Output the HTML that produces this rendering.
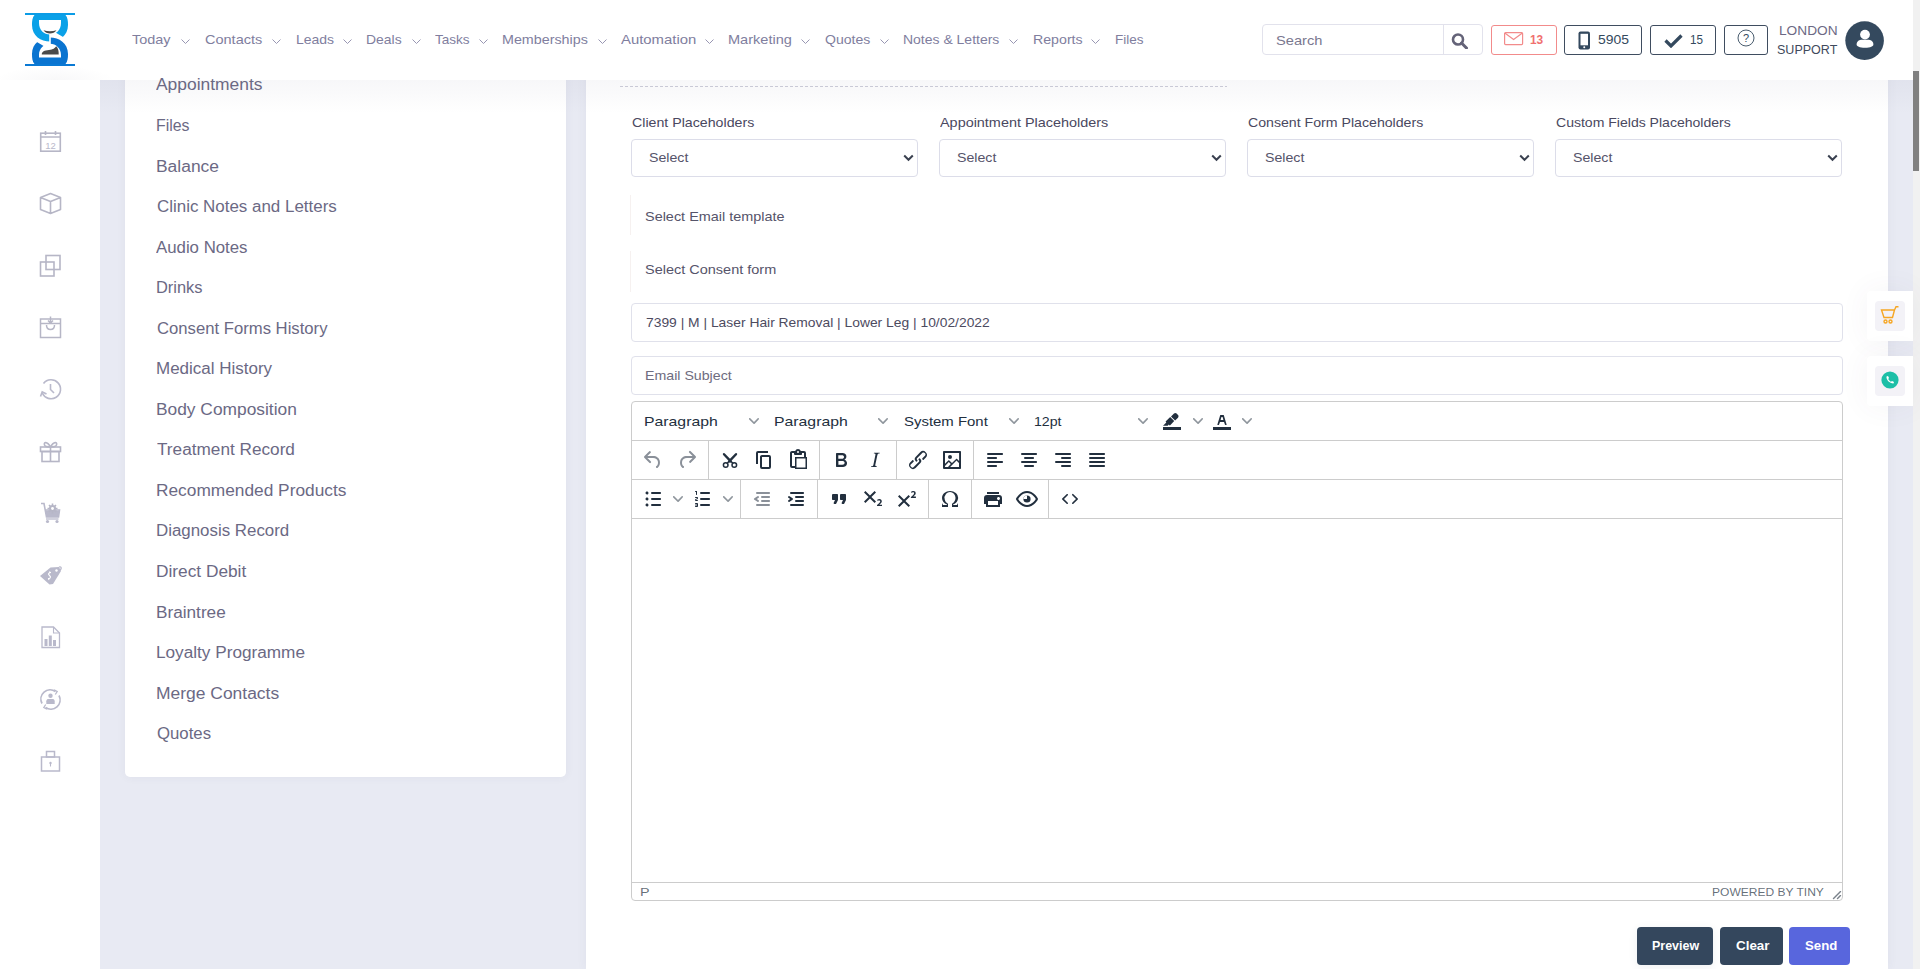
<!DOCTYPE html>
<html><head><meta charset="utf-8"><title>Email</title>
<style>
*{box-sizing:border-box;margin:0;padding:0}
html,body{width:1920px;height:969px;overflow:hidden;background:#fff;font-family:"Liberation Sans",sans-serif}
.a{position:absolute;display:block}
.t{position:absolute;white-space:nowrap;line-height:normal;transform-origin:0 0;font-family:"Liberation Sans",sans-serif}
.box{position:absolute}
</style></head><body>
<!-- grey background -->
<div class="box" style="left:100px;top:80px;width:1813px;height:889px;background:#e8eaf3"></div>
<!-- left card -->
<div class="box" style="left:125px;top:0;width:441px;height:777px;background:#fff;border-radius:0 0 5px 5px;box-shadow:0 0 10px rgba(70,60,110,.06)"></div>
<!-- main panel -->
<div class="box" style="left:586px;top:0;width:1302px;height:969px;background:#fff;box-shadow:0 0 10px rgba(70,60,110,.06)"></div>
<!-- header shadow -->
<div class="box" style="left:100px;top:80px;width:1813px;height:34px;background:linear-gradient(to bottom,rgba(70,70,110,.045),rgba(70,70,110,0))"></div>
<!-- header -->
<div class="box" style="left:0;top:0;width:1913px;height:80px;background:#fff"></div>
<div class="box" style="left:0;top:56px;width:120px;height:24px;background:radial-gradient(ellipse 60px 14px at 55px 24px,rgba(60,60,90,.035),rgba(60,60,90,0))"></div>
<!-- left rail -->
<div class="box" style="left:0;top:80px;width:100px;height:889px;background:#fff"></div>
<!-- scrollbar -->
<div class="box" style="left:1913px;top:0;width:7px;height:969px;background:#f1f1f1"></div>
<div class="box" style="left:1913px;top:71px;width:6px;height:100px;background:#808080"></div>

<!-- logo -->
<svg class="a" style="left:25px;top:13px" width="50" height="53" viewBox="0 0 50 53">
  <defs>
    <clipPath id="cl1"><path d="M0 0 H50 V28 L38.5 24.3 L30.5 19.5 L24.2 19 V31 H0 Z"/></clipPath>
    <clipPath id="cl2"><path d="M50 53 H0 V25 L11.5 28.7 L19.5 33.5 L25.8 34 V22 H50 Z"/></clipPath>
  </defs>
  <rect x="0" y="0" width="50" height="2" fill="#0b9ce6"/>
  <rect x="0" y="51" width="50" height="2" fill="#0a79d4"/>
  <path clip-path="url(#cl1)" fill-rule="evenodd" fill="#0aa1e8" d="M9.5 2 C7.3 4.5 7 8 7 12 C7 23 16 28.5 25 28.5 C34 28.5 43 23 43 12 C43 8 42.7 4.5 40.5 2 Z M14 7 H36 V10 C36 17 31 21.5 25 21.5 C19 21.5 14 17 14 10 Z"/>
  <path clip-path="url(#cl2)" fill-rule="evenodd" fill="#0a74d0" d="M40.5 51 C42.7 48.5 43 45 43 41 C43 30 34 24.5 25 24.5 C16 24.5 7 30 7 41 C7 45 7.3 48.5 9.5 51 Z M36 44.6 H14 V42 C14 35.5 19 30.8 25 30.8 C31 30.8 36 35.5 36 42 Z"/>
  <path d="M18.5 17.3 Q25 19 31.5 17.3 Q29 20.6 25 20.6 Q21 20.6 18.5 17.3 Z" fill="#4a4a4a"/>
  <path d="M16.8 41.6 C16.6 38.6 19.5 37.4 24 37 C28 36.6 30 35.2 31.2 33.3 C33.2 35 33.8 38 33.7 41.6 Z" fill="#4a4a4a"/>
</svg>

<!-- search box -->
<div class="box" style="left:1262px;top:24px;width:221px;height:31px;border:1px solid #e2e2ec;border-radius:4px"></div>
<div class="box" style="left:1443px;top:25px;width:1px;height:29px;background:#e2e2ec"></div>
<svg class="a" style="left:1451px;top:33px" width="18" height="16" viewBox="0 0 18 16"><circle cx="7" cy="6.5" r="5" fill="none" stroke="#646378" stroke-width="2.6"/><path d="M10.5 10 L15.5 15" stroke="#646378" stroke-width="3" stroke-linecap="round"/></svg>
<!-- mail btn -->
<div class="box" style="left:1491px;top:25px;width:66px;height:30px;border:1px solid #f28b8b;border-radius:3px"></div>
<svg class="a" style="left:1504px;top:32px" width="20" height="14" viewBox="0 0 20 14"><rect x="0.6" y="0.6" width="18" height="12" rx="1" fill="none" stroke="#f28b8b" stroke-width="1.2"/><path d="M0.8 1 L9.6 7.5 L18.4 1" fill="none" stroke="#f28b8b" stroke-width="1.2"/></svg>
<!-- phone btn -->
<div class="box" style="left:1564px;top:25px;width:78px;height:30px;border:1px solid #3f4d60;border-radius:3px"></div>
<svg class="a" style="left:1578px;top:31px" width="13" height="19" viewBox="0 0 13 19"><rect x="0.5" y="0.5" width="11.5" height="18" rx="2" fill="#34495e"/><rect x="2.5" y="2.8" width="7.5" height="11.5" fill="#fff"/><circle cx="6.25" cy="16.3" r="1" fill="#fff"/></svg>
<!-- check btn -->
<div class="box" style="left:1650px;top:25px;width:66px;height:30px;border:1px solid #3f4d60;border-radius:3px"></div>
<svg class="a" style="left:1664px;top:33px" width="19" height="15" viewBox="0 0 19 15"><path d="M1.5 7.5 L7 13 L17.5 2.5" fill="none" stroke="#34495e" stroke-width="3.2"/></svg>
<!-- help btn -->
<div class="box" style="left:1724px;top:25px;width:44px;height:30px;border:1px solid #3f4d60;border-radius:3px"></div>
<svg class="a" style="left:1737px;top:29px" width="18" height="18" viewBox="0 0 18 18"><circle cx="9" cy="9" r="8" fill="none" stroke="#34495e" stroke-width="0.9"/><text x="9" y="13" font-family="Liberation Sans" font-size="11" text-anchor="middle" fill="#34495e">?</text></svg>
<!-- avatar -->
<svg class="a" style="left:1845px;top:21px" width="40" height="40" viewBox="0 0 40 40"><circle cx="19.6" cy="19.6" r="19.3" fill="#34495e"/><circle cx="20" cy="13.6" r="4.9" fill="#fff"/><path d="M11.6 23.5 C11.6 20.2 14.6 18.8 17 18.8 L23 18.8 C25.4 18.8 28.4 20.2 28.4 23.5 C28.4 25.3 25.5 26.8 20 26.8 C14.5 26.8 11.6 25.3 11.6 23.5 Z" fill="#fff"/></svg>

<!-- sidebar icons -->
<g></g>
<svg class="a" style="left:38px;top:129px" width="25" height="25" viewBox="0 0 25 25" fill="none" stroke="#b6b6c6" stroke-width="1.6">
  <rect x="2.7" y="4.2" width="19.6" height="18" />
  <path d="M2.7 8 H22.3 M7.5 2 V6 M17.5 2 V6"/>
  <text x="12.5" y="19.6" font-family="Liberation Sans" font-size="9.5" text-anchor="middle" fill="#b9b9cb" stroke="none">12</text>
</svg>
<svg class="a" style="left:38px;top:191px" width="25" height="25" viewBox="0 0 25 25" fill="none" stroke="#b6b6c6" stroke-width="1.6" stroke-linejoin="round">
  <path d="M12.5 2.5 L22.5 6.5 V18.5 L12.5 22.5 L2.5 18.5 V6.5 Z M2.5 6.5 L12.5 10.5 L22.5 6.5 M12.5 10.5 V22.5"/>
</svg>
<svg class="a" style="left:38px;top:253px" width="25" height="25" viewBox="0 0 25 25" fill="none" stroke="#b6b6c6" stroke-width="1.6">
  <rect x="8" y="2.5" width="14" height="14"/><rect x="2.5" y="9" width="13.5" height="14"/>
</svg>
<svg class="a" style="left:38px;top:315px" width="25" height="25" viewBox="0 0 25 25" fill="none" stroke="#b6b6c6" stroke-width="1.5">
  <rect x="2.5" y="4" width="20" height="18.5"/><path d="M2.5 8.5 H22.5 M12.5 1.5 V8 M10 5.5 L12.5 8 L15 5.5 M8.5 10 C8.5 16 16.5 16 16.5 10"/>
</svg>
<svg class="a" style="left:38px;top:377px" width="25" height="25" viewBox="0 0 25 25" fill="none" stroke="#b9b9cb" stroke-width="1.6">
  <path d="M4.3 16 A9.5 9.5 0 1 0 5.5 6.5"/><path d="M12.5 7 V12.5 L16 16"/><path d="M2.5 19.5 L4.2 14.8 L8.5 17" />
</svg>
<svg class="a" style="left:38px;top:439px" width="25" height="25" viewBox="0 0 25 25" fill="none" stroke="#b6b6c6" stroke-width="1.6">
  <rect x="2.5" y="8" width="20" height="4.5"/><rect x="4" y="12.5" width="17" height="10"/><path d="M12.5 8 V22.5 M12.5 8 C9 2 5.5 3 6.5 6 C7 7.5 9 8 12.5 8 C16 8 18 7.5 18.5 6 C19.5 3 16 2 12.5 8"/>
</svg>
<svg class="a" style="left:38px;top:501px" width="25" height="25" viewBox="0 0 25 25" fill="#b9b9cb">
  <path d="M3 2.5 L6 2.5 L8.5 16 L20.5 16 L21.5 9 L18 9 A3.5 3.5 0 0 1 11 9 L7 9" fill="none" stroke="#b9b9cb" stroke-width="1.6"/>
  <path d="M7.3 9.5 L21.5 9.5 L20.5 16 L8.5 16 Z"/>
  <circle cx="14.5" cy="7.5" r="3.6"/><path d="M14.5 2.5 V12.5 M9.5 7.5 H19.5 M11 4 L18 11 M18 4 L11 11" stroke="#b6b6c6" stroke-width="1.6"/>
  <circle cx="14.5" cy="7.5" r="1.4" fill="#fff"/>
  <circle cx="9.5" cy="20.5" r="1.6"/><circle cx="19" cy="20.5" r="1.6"/><path d="M8 18 H20.5" stroke="#b9b9cb" stroke-width="1.3"/>
</svg>
<svg class="a" style="left:38px;top:563px" width="25" height="25" viewBox="0 0 25 25">
  <path d="M2 13 L12.5 4.5 L21 4 L23 8 L15 21 L11.5 21.5 Z" fill="#b9b9cb"/>
  <path d="M21 4 C24 3 24 7 20.5 7.5" fill="none" stroke="#b9b9cb" stroke-width="1.3"/>
  <circle cx="18.5" cy="7.5" r="1.2" fill="#fff"/>
  <path d="M13 9.5 C11 9.5 9.5 11 11.5 12.5 C13.5 14 12 16 10 15.5 M11.5 8.5 L11.8 9.5 M11 16 L10.6 17" fill="none" stroke="#fff" stroke-width="1.2"/>
</svg>
<svg class="a" style="left:38px;top:625px" width="25" height="25" viewBox="0 0 25 25">
  <path d="M4 2 H15.5 L21.5 8 V22.5 H4 Z" fill="none" stroke="#b9b9cb" stroke-width="1.3"/>
  <path d="M15.5 2 V8 H21.5" fill="none" stroke="#b9b9cb" stroke-width="1.1"/>
  <rect x="6.5" y="14" width="3" height="7" fill="#b9b9cb"/><rect x="10.8" y="10.5" width="3" height="10.5" fill="#b9b9cb"/><rect x="15" y="15" width="3" height="6" fill="#b9b9cb"/>
</svg>
<svg class="a" style="left:38px;top:687px" width="25" height="25" viewBox="0 0 25 25" fill="none" stroke="#b9b9cb" stroke-width="1.7">
  <path d="M4 16.5 A9.3 9.3 0 0 1 17.5 4.5"/><path d="M21 8.5 A9.3 9.3 0 0 1 7.5 20.5"/>
  <path d="M16 2.8 L19.2 4.5 L17.3 7.5 M9 22.2 L5.8 20.5 L7.7 17.5" stroke-width="1.3"/>
  <circle cx="12.5" cy="8.8" r="2.2" fill="#b9b9cb" stroke="none"/><path d="M8.3 17 V14.2 C8.3 12.6 9.5 12 10.5 12 H14.5 C15.5 12 16.7 12.6 16.7 14.2 V17 Z" fill="#b9b9cb" stroke="none"/>
</svg>
<svg class="a" style="left:38px;top:749px" width="25" height="25" viewBox="0 0 25 25" fill="none" stroke="#b9b9cb" stroke-width="1.5">
  <rect x="3.5" y="8" width="18" height="14"/><rect x="8.5" y="2.5" width="8" height="5.5"/>
  <circle cx="12.5" cy="14" r="1.2" fill="#b9b9cb" stroke="none"/><path d="M12.5 14 V17.5" stroke-width="1.1"/>
</svg>

<!-- dashed line -->
<div class="box" style="left:620px;top:86px;width:607px;height:1px;background:repeating-linear-gradient(to right,#c9c9d6 0 3px,transparent 3px 5px)"></div>

<!-- selects -->
<div class="box" style="left:631px;top:139px;width:287px;height:38px;border:1px solid #dcdde9;border-radius:4px"></div>
<div class="box" style="left:939px;top:139px;width:287px;height:38px;border:1px solid #dcdde9;border-radius:4px"></div>
<div class="box" style="left:1247px;top:139px;width:287px;height:38px;border:1px solid #dcdde9;border-radius:4px"></div>
<div class="box" style="left:1555px;top:139px;width:287px;height:38px;border:1px solid #dcdde9;border-radius:4px"></div>
<svg class="a" style="left:903px;top:154px" width="11" height="8" viewBox="0 0 11 8"><path d="M1.2 1.5 L5.5 5.8 L9.8 1.5" fill="none" stroke="#3a4150" stroke-width="2"/></svg>
<svg class="a" style="left:1211px;top:154px" width="11" height="8" viewBox="0 0 11 8"><path d="M1.2 1.5 L5.5 5.8 L9.8 1.5" fill="none" stroke="#3a4150" stroke-width="2"/></svg>
<svg class="a" style="left:1519px;top:154px" width="11" height="8" viewBox="0 0 11 8"><path d="M1.2 1.5 L5.5 5.8 L9.8 1.5" fill="none" stroke="#3a4150" stroke-width="2"/></svg>
<svg class="a" style="left:1827px;top:154px" width="11" height="8" viewBox="0 0 11 8"><path d="M1.2 1.5 L5.5 5.8 L9.8 1.5" fill="none" stroke="#3a4150" stroke-width="2"/></svg>

<!-- faint select2 borders -->
<div class="box" style="left:630px;top:195px;width:1px;height:40px;background:#f6f1f0"></div>
<div class="box" style="left:630px;top:251px;width:1px;height:41px;background:#f6f1f0"></div>

<!-- inputs -->
<div class="box" style="left:631px;top:303px;width:1212px;height:39px;border:1px solid #e0e1eb;border-radius:4px"></div>
<div class="box" style="left:631px;top:356px;width:1212px;height:39px;border:1px solid #e0e1eb;border-radius:4px"></div>

<!-- editor -->
<div class="box" style="left:631px;top:401px;width:1212px;height:500px;border:1px solid #cccccc;border-radius:4px"></div>
<div class="box" style="left:632px;top:440px;width:1210px;height:1px;background:#cccccc"></div>
<div class="box" style="left:632px;top:479px;width:1210px;height:1px;background:#cccccc"></div>
<div class="box" style="left:632px;top:518px;width:1210px;height:1px;background:#cccccc"></div>
<div class="box" style="left:632px;top:882px;width:1210px;height:1px;background:#cccccc"></div>
<!-- separators row1 -->
<div class="box" style="left:708px;top:441px;width:1px;height:38px;background:#cccccc"></div>
<div class="box" style="left:819px;top:441px;width:1px;height:38px;background:#cccccc"></div>
<div class="box" style="left:896px;top:441px;width:1px;height:38px;background:#cccccc"></div>
<div class="box" style="left:973px;top:441px;width:1px;height:38px;background:#cccccc"></div>
<!-- separators row2 -->
<div class="box" style="left:740px;top:480px;width:1px;height:38px;background:#cccccc"></div>
<div class="box" style="left:817px;top:480px;width:1px;height:38px;background:#cccccc"></div>
<div class="box" style="left:928px;top:480px;width:1px;height:38px;background:#cccccc"></div>
<div class="box" style="left:971px;top:480px;width:1px;height:38px;background:#cccccc"></div>
<div class="box" style="left:1048px;top:480px;width:1px;height:38px;background:#cccccc"></div>
<!-- resize handle -->
<svg class="a" style="left:1832px;top:890px" width="10" height="10" viewBox="0 0 10 10" fill="rgba(34,47,62,.6)"><path d="M8.1 1.1A.5.5 0 119 2l-7 7A.5.5 0 111 8l7-7zM8.1 5.1A.5.5 0 119 6l-3 3A.5.5 0 115 8l3-3z"/></svg>

<!-- buttons -->
<div class="box" style="left:1637px;top:927px;width:76px;height:38px;background:#34475d;border-radius:4px;box-shadow:0 2px 10px rgba(52,71,93,.08)"></div>
<div class="box" style="left:1720px;top:927px;width:63px;height:38px;background:#34475d;border-radius:4px"></div>
<div class="box" style="left:1789px;top:927px;width:61px;height:38px;background:#5866dd;border-radius:4px"></div>

<!-- floating widgets -->
<div class="box" style="left:1867px;top:291px;width:46px;height:50px;background:#fff;border-radius:4px 0 0 4px;box-shadow:0 0 30px rgba(82,63,105,.06)"></div>
<div class="box" style="left:1875px;top:301px;width:30px;height:30px;background:#f3f2f7;border-radius:4px"></div>
<svg class="a" style="left:1880px;top:305px" width="20" height="20" viewBox="0 0 20 20" fill="none" stroke="#f6a623" stroke-width="1.4"><path d="M1.5 5 H14.5 L12.5 12.5 H4 Z M14.5 5 L16 1.8 H18.5"/><circle cx="5.5" cy="16.5" r="1.5"/><circle cx="10.5" cy="16.5" r="1.5"/></svg>
<div class="box" style="left:1867px;top:356px;width:46px;height:50px;background:#fff;border-radius:4px 0 0 4px;box-shadow:0 0 30px rgba(82,63,105,.06)"></div>
<div class="box" style="left:1875px;top:366px;width:30px;height:30px;background:#f3f2f7;border-radius:4px"></div>
<svg class="a" style="left:1881px;top:371px" width="18" height="18" viewBox="0 0 18 18"><circle cx="9" cy="9" r="8.6" fill="#1cbfa7"/><path d="M5.5 5.5 C5 8.5 8.5 12.5 12.5 12.5 L13 11 L11 10 L10 10.8 C8.8 10.2 7.8 9.2 7.2 8 L8 7 L7 5 Z" fill="#fff"/></svg>

<svg class="a" style="left:181px;top:38.5px;" width="9" height="5" viewBox="0 0 9 5"><path d="M0.5 0.5L4.5 4.5L8.5 0.5" fill="none" stroke="#9896b2" stroke-width="1"/></svg>
<svg class="a" style="left:272px;top:38.5px;" width="9" height="5" viewBox="0 0 9 5"><path d="M0.5 0.5L4.5 4.5L8.5 0.5" fill="none" stroke="#9896b2" stroke-width="1"/></svg>
<svg class="a" style="left:342.75px;top:38.5px;" width="9" height="5" viewBox="0 0 9 5"><path d="M0.5 0.5L4.5 4.5L8.5 0.5" fill="none" stroke="#9896b2" stroke-width="1"/></svg>
<svg class="a" style="left:411.9px;top:38.5px;" width="9" height="5" viewBox="0 0 9 5"><path d="M0.5 0.5L4.5 4.5L8.5 0.5" fill="none" stroke="#9896b2" stroke-width="1"/></svg>
<svg class="a" style="left:479px;top:38.5px;" width="9" height="5" viewBox="0 0 9 5"><path d="M0.5 0.5L4.5 4.5L8.5 0.5" fill="none" stroke="#9896b2" stroke-width="1"/></svg>
<svg class="a" style="left:597.5px;top:38.5px;" width="9" height="5" viewBox="0 0 9 5"><path d="M0.5 0.5L4.5 4.5L8.5 0.5" fill="none" stroke="#9896b2" stroke-width="1"/></svg>
<svg class="a" style="left:705px;top:38.5px;" width="9" height="5" viewBox="0 0 9 5"><path d="M0.5 0.5L4.5 4.5L8.5 0.5" fill="none" stroke="#9896b2" stroke-width="1"/></svg>
<svg class="a" style="left:801px;top:38.5px;" width="9" height="5" viewBox="0 0 9 5"><path d="M0.5 0.5L4.5 4.5L8.5 0.5" fill="none" stroke="#9896b2" stroke-width="1"/></svg>
<svg class="a" style="left:880px;top:38.5px;" width="9" height="5" viewBox="0 0 9 5"><path d="M0.5 0.5L4.5 4.5L8.5 0.5" fill="none" stroke="#9896b2" stroke-width="1"/></svg>
<svg class="a" style="left:1009px;top:38.5px;" width="9" height="5" viewBox="0 0 9 5"><path d="M0.5 0.5L4.5 4.5L8.5 0.5" fill="none" stroke="#9896b2" stroke-width="1"/></svg>
<svg class="a" style="left:1091px;top:38.5px;" width="9" height="5" viewBox="0 0 9 5"><path d="M0.5 0.5L4.5 4.5L8.5 0.5" fill="none" stroke="#9896b2" stroke-width="1"/></svg>
<svg class="a" style="left:641px;top:448px" width="24" height="24" viewBox="0 0 24 24" fill="#8a9099"><path d="M6.4 8H12c3.7 0 6.2 2 6.8 5.1.6 2.7-.4 5.6-2.3 6.8a1 1 0 01-1-1.8c1.1-.6 1.8-2.7 1.4-4.6-.5-2.1-2.1-3.5-4.9-3.5H6.4l3.3 3.3a1 1 0 11-1.4 1.4l-5-5a1 1 0 010-1.4l5-5a1 1 0 011.4 1.4L6.4 8z"/></svg>
<svg class="a" style="left:675px;top:448px" width="24" height="24" viewBox="0 0 24 24" fill="#8a9099"><path d="M17.6 10H12c-2.8 0-4.4 1.4-4.9 3.5-.4 2 .3 4 1.4 4.6a1 1 0 11-1 1.8c-2-1.2-2.9-4.1-2.3-6.8.6-3 3-5.1 6.8-5.1h5.6l-3.3-3.3a1 1 0 111.4-1.4l5 5a1 1 0 010 1.4l-5 5a1 1 0 01-1.4-1.4l3.3-3.3z"/></svg>
<svg class="a" style="left:718px;top:448px" width="24" height="24" viewBox="0 0 24 24" fill="#222f3e"><path d="M6 6.2 L12.8 13.4 M18 6.2 L11.2 13.4" stroke="#222f3e" stroke-width="2.4" stroke-linecap="round" fill="none"/><path d="M12 12.6 L9 15.2 M12 12.6 L15 15.2" stroke="#222f3e" stroke-width="1.5" fill="none"/><circle cx="7.7" cy="17" r="2.3" fill="none" stroke="#222f3e" stroke-width="1.5"/><circle cx="16.3" cy="17" r="2.3" fill="none" stroke="#222f3e" stroke-width="1.5"/></svg>
<svg class="a" style="left:752px;top:448px" width="24" height="24" viewBox="0 0 24 24" fill="#222f3e"><path d="M16 3H6a2 2 0 00-2 2v11h2V5h10V3zm1 4a2 2 0 012 2v10a2 2 0 01-2 2h-7a2 2 0 01-2-2V9c0-1.2.9-2 2-2h7zm0 12V9h-7v10h7z"/></svg>
<svg class="a" style="left:786px;top:448px" width="24" height="24" viewBox="0 0 24 24" fill="#222f3e"><path d="M18 9V5h-2v1c0 .6-.4 1-1 1H9a1 1 0 01-1-1V5H6v13h3V9h9zM9 20H6a2 2 0 01-2-2V5c0-1.1.9-2 2-2h3.2A3 3 0 0112 1a3 3 0 012.8 2H18a2 2 0 012 2v4h1v12H9v-1zm1.5-9.5v9h9v-9h-9zM12 3a1 1 0 100 2 1 1 0 000-2z"/></svg>
<svg class="a" style="left:829px;top:448px" width="24" height="24" viewBox="0 0 24 24" fill="#222f3e"><path d="M7.8 19c-.3 0-.5 0-.6-.2l-.2-.5V5.7c0-.2 0-.4.2-.5l.6-.2h5c1.5 0 2.7.3 3.5 1 .7.6 1.1 1.4 1.1 2.5a3 3 0 01-.6 1.9c-.4.6-1 1-1.6 1.2.4.1.9.3 1.3.6s.8.7 1 1.2c.4.4.5 1 .5 1.6 0 1.3-.4 2.3-1.3 3-.8.7-2.1 1-3.8 1H7.8zm5-8.3c.6 0 1.2-.1 1.600-.5.4-.3.6-.7.6-1.3 0-1.1-.8-1.7-2.3-1.7H9.3v3.5h3.4zm.5 6c.7 0 1.3-.1 1.7-.4.4-.4.6-.9.6-1.5s-.2-1-.7-1.4c-.4-.3-1-.4-2-.4H9.4v3.8h4z"/></svg>
<svg class="a" style="left:863px;top:448px" width="24" height="24" viewBox="0 0 24 24" fill="#222f3e"><path d="M16.7 4.7l-.1.9h-.3c-.6 0-1 0-1.4.3-.3.3-.4.6-.5 1.1l-2.1 9.8v.6c0 .5.4.8 1.4.8h.2l-.2.8H8l.2-.8h.2c1.1 0 1.8-.5 2-1.5l2-9.8.1-.5c0-.6-.4-.8-1.4-.8h-.3l.2-.9h5.8z"/></svg>
<svg class="a" style="left:906px;top:448px" width="24" height="24" viewBox="0 0 24 24" fill="#222f3e"><path d="M6.2 12.3a1 1 0 011.4 1.4l-2.1 2a2 2 0 102.7 2.8l4.8-4.8a1 1 0 000-1.4 1 1 0 111.4-1.3 2.9 2.9 0 010 4L9.600 20a3.9 3.9 0 01-5.5-5.5l2-2zm11.6-.6a1 1 0 01-1.4-1.4l2-2a2 2 0 10-2.600-2.8L11 10.3a1 1 0 000 1.4A1 1 0 119.6 13a2.9 2.9 0 010-4L14.4 4a3.9 3.9 0 015.5 5.5l-2 2z"/></svg>
<svg class="a" style="left:940px;top:448px" width="24" height="24" viewBox="0 0 24 24" fill="#222f3e"><path d="M5 15.7l3.3-3.2c.3-.3.7-.3 1 0L12 15l4.1-4c.3-.4.8-.4 1 0l2 1.9V5H5v10.7zM5 18V19h3l2.8-2.9-2-2L5 17.9zm14-3l-2.5-2.4-6.4 6.5H19v-4zM4 3h16c.6 0 1 .4 1 1v16c0 .6-.4 1-1 1H4a1 1 0 01-1-1V4c0-.6.4-1 1-1zm6 8a2 2 0 100-4 2 2 0 000 4z"/></svg>
<svg class="a" style="left:983px;top:448px" width="24" height="24" viewBox="0 0 24 24" fill="#222f3e"><path d="M5 5h14c.6 0 1 .4 1 1s-.4 1-1 1H5a1 1 0 110-2zm0 4h8c.6 0 1 .4 1 1s-.4 1-1 1H5a1 1 0 110-2zm0 8h8c.6 0 1 .4 1 1s-.4 1-1 1H5a1 1 0 010-2zm0-4h14c.6 0 1 .4 1 1s-.4 1-1 1H5a1 1 0 010-2z"/></svg>
<svg class="a" style="left:1017px;top:448px" width="24" height="24" viewBox="0 0 24 24" fill="#222f3e"><path d="M5 5h14c.6 0 1 .4 1 1s-.4 1-1 1H5a1 1 0 110-2zm3 4h8c.6 0 1 .4 1 1s-.4 1-1 1H8a1 1 0 110-2zm0 8h8c.6 0 1 .4 1 1s-.4 1-1 1H8a1 1 0 010-2zm-3-4h14c.6 0 1 .4 1 1s-.4 1-1 1H5a1 1 0 010-2z"/></svg>
<svg class="a" style="left:1051px;top:448px" width="24" height="24" viewBox="0 0 24 24" fill="#222f3e"><path d="M5 5h14c.6 0 1 .4 1 1s-.4 1-1 1H5a1 1 0 110-2zm6 4h8c.6 0 1 .4 1 1s-.4 1-1 1h-8a1 1 0 010-2zm0 8h8c.6 0 1 .4 1 1s-.4 1-1 1h-8a1 1 0 010-2zm-6-4h14c.6 0 1 .4 1 1s-.4 1-1 1H5a1 1 0 010-2z"/></svg>
<svg class="a" style="left:1085px;top:448px" width="24" height="24" viewBox="0 0 24 24" fill="#222f3e"><path d="M5 5h14c.6 0 1 .4 1 1s-.4 1-1 1H5a1 1 0 110-2zm0 4h14c.6 0 1 .4 1 1s-.4 1-1 1H5a1 1 0 110-2zm0 4h14c.6 0 1 .4 1 1s-.4 1-1 1H5a1 1 0 010-2zm0 4h14c.6 0 1 .4 1 1s-.4 1-1 1H5a1 1 0 010-2z"/></svg>
<svg class="a" style="left:641px;top:487px" width="24" height="24" viewBox="0 0 24 24" fill="#222f3e"><path d="M11 5h8c.6 0 1 .4 1 1s-.4 1-1 1h-8a1 1 0 010-2zm0 6h8c.6 0 1 .4 1 1s-.4 1-1 1h-8a1 1 0 010-2zm0 6h8c.6 0 1 .4 1 1s-.4 1-1 1h-8a1 1 0 010-2zM4.5 6c0-.4.1-.8.4-1 .3-.4.7-.5 1.1-.5.4 0 .8.1 1 .4.4.3.5.7.5 1.1 0 .4-.1.8-.4 1-.3.4-.7.5-1.1.5-.4 0-.8-.1-1-.4-.4-.3-.5-.7-.5-1.1zm0 6c0-.4.1-.8.4-1 .3-.4.7-.5 1.1-.5.4 0 .8.1 1 .4.4.3.5.7.5 1.1 0 .4-.1.8-.4 1-.3.4-.7.5-1.1.5-.4 0-.8-.1-1-.4-.4-.3-.5-.7-.5-1.1zm0 6c0-.4.1-.8.4-1 .3-.4.7-.5 1.1-.5.4 0 .8.1 1 .4.4.3.5.7.5 1.1 0 .4-.1.8-.4 1-.3.4-.7.5-1.1.5-.4 0-.8-.1-1-.4-.4-.3-.5-.7-.5-1.1z"/></svg>
<svg class="a" style="left:691px;top:487px" width="24" height="24" viewBox="0 0 24 24" fill="#222f3e"><path fill-rule="evenodd" d="M10 17h8c.6 0 1 .4 1 1s-.4 1-1 1h-8a1 1 0 010-2zm0-6h8c.6 0 1 .4 1 1s-.4 1-1 1h-8a1 1 0 010-2zm0-6h8c.6 0 1 .4 1 1s-.4 1-1 1h-8a1 1 0 110-2zM6 4v3.5c0 .3-.2.5-.5.5a.5.5 0 01-.5-.5V5h-.5a.5.5 0 010-1H6zm-1 8.8l.2.2h1.3c.3 0 .5.2.5.5s-.2.5-.5.5H4.9a1 1 0 01-.9-1V13c0-.4.3-.8.6-1l1.2-.4.2-.3a.2.2 0 00-.2-.2H4.5a.5.5 0 01-.5-.5c0-.3.2-.5.5-.5h1.6c.5 0 .9.4.9 1v.1c0 .4-.3.8-.6 1l-1.2.4-.2.3zM7 17v2c0 .6-.4 1-1 1H4.5a.5.5 0 010-1h1.2c.2 0 .3-.1.3-.3 0-.2-.1-.3-.3-.3H4.4a.4.4 0 110-.8h1.3c.2 0 .3-.1.3-.3 0-.2-.1-.3-.3-.3H4.5a.5.5 0 110-1H6c.6 0 1 .4 1 1z"/></svg>
<svg class="a" style="left:750px;top:487px" width="24" height="24" viewBox="0 0 24 24" fill="#8a9099"><path d="M7 5h12c.6 0 1 .4 1 1s-.4 1-1 1H7a1 1 0 110-2zm5 4h7c.6 0 1 .4 1 1s-.4 1-1 1h-7a1 1 0 010-2zm0 4h7c.6 0 1 .4 1 1s-.4 1-1 1h-7a1 1 0 010-2zm-5 4h12a1 1 0 010 2H7a1 1 0 010-2zm1.6-3.8a1 1 0 01-1.2 1.6l-3-2a1 1 0 010-1.6l3-2a1 1 0 011.2 1.6L6.8 12l1.8 1.2z"/></svg>
<svg class="a" style="left:784px;top:487px" width="24" height="24" viewBox="0 0 24 24" fill="#222f3e"><path d="M7 5h12c.6 0 1 .4 1 1s-.4 1-1 1H7a1 1 0 110-2zm5 4h7c.6 0 1 .4 1 1s-.4 1-1 1h-7a1 1 0 010-2zm0 4h7c.6 0 1 .4 1 1s-.4 1-1 1h-7a1 1 0 010-2zm-5 4h12a1 1 0 010 2H7a1 1 0 010-2zm-2.6-3.8L6.2 12l-1.8-1.2a1 1 0 011.2-1.6l3 2a1 1 0 010 1.6l-3 2a1 1 0 11-1.2-1.6z"/></svg>
<svg class="a" style="left:827px;top:487px" width="24" height="24" viewBox="0 0 24 24" fill="#222f3e"><path d="M7.5 17h.9c.4 0 .7-.2.9-.6L11 13V8c0-.6-.4-1-1-1H6a1 1 0 00-1 1v4c0 .6.4 1 1 1h2l-1.3 2.7a1 1 0 00.8 1.3zm8 0h.9c.4 0 .7-.2.9-.6L19 13V8c0-.6-.4-1-1-1h-4a1 1 0 00-1 1v4c0 .6.4 1 1 1h2l-1.3 2.7a1 1 0 00.8 1.3z"/></svg>
<svg class="a" style="left:861px;top:487px" width="24" height="24" viewBox="0 0 24 24" fill="#222f3e"><path d="M10.4 10l4.6 4.6-1.4 1.4L9 11.4 4.4 16 3 14.6 7.6 10 3 5.4 4.4 4 9 8.6 13.6 4 15 5.4 10.4 10zM21 19h-5v-1l1-.8 1.7-1.6c.3-.4.5-.8.5-1.2 0-.3 0-.6-.2-.7-.2-.2-.5-.3-.9-.3a2 2 0 00-.8.2l-.7.3-.4-1.1 1-.6 1.2-.2c.8 0 1.4.3 1.800.7.4.4.6.9.6 1.5s-.2 1.1-.5 1.6a8 8 0 01-1.3 1.3l-.6.6h2.6V19z"/></svg>
<svg class="a" style="left:895px;top:487px" width="24" height="24" viewBox="0 0 24 24" fill="#222f3e"><path d="M15 9.4L10.4 14l4.6 4.6-1.4 1.4L9 15.4 4.4 20 3 18.6 7.6 14 3 9.4 4.4 8 9 12.6 13.6 8 15 9.4zm5.9 1.6h-5v-1l1-.8 1.7-1.6c.3-.5.5-.9.5-1.3 0-.3 0-.5-.2-.7-.2-.2-.5-.3-.9-.3l-.8.2-.7.4-.4-1.2c.2-.2.5-.4 1-.5.3-.2.8-.2 1.2-.2.8 0 1.4.2 1.8.6.4.4.6 1 .6 1.6 0 .5-.2 1-.5 1.5l-1.3 1.4-.6.5h2.6V11z"/></svg>
<svg class="a" style="left:938px;top:487px" width="24" height="24" viewBox="0 0 24 24" fill="#222f3e"><path fill-rule="evenodd" d="M15 18h4l1-2v4h-6v-3.3l1.4-1a6 6 0 001.8-2.9 6.3 6.3 0 00-.1-4.1 5.8 5.8 0 00-3-3.2c-.6-.3-1.300-.5-2.100-.5a5.1 5.1 0 00-3.9 1.8 6.3 6.3 0 00-1.3 6 6.2 6.2 0 001.8 3l1.4.9V20H4v-4l1 2h4v-.5l-2-1L5.4 15A6.5 6.5 0 014 11c0-1 .2-1.9.6-2.7A7 7 0 016.3 6C7.1 5.4 8 5 9 4.5c1-.3 2-.5 3.1-.5a8.8 8.8 0 015.7 2 7 7 0 011.7 2.3 6 6 0 01.2 4.8c-.2.7-.6 1.300-1 1.900a7.600 7.600 0 01-3.600 2.500v.5z"/></svg>
<svg class="a" style="left:981px;top:487px" width="24" height="24" viewBox="0 0 24 24" fill="#222f3e"><path d="M18 8H6a3 3 0 00-3 3v6h2v3h14v-3h2v-6a3 3 0 00-3-3zm-1 10H7v-4h10v4zm.5-5c-.8 0-1.5-.7-1.5-1.5s.7-1.5 1.5-1.5 1.5.7 1.5 1.5-.7 1.5-1.5 1.5zm.5-8H6v2h12V5z"/></svg>
<svg class="a" style="left:1015px;top:487px" width="24" height="24" viewBox="0 0 24 24" fill="#222f3e"><path d="M3.5 12.5c.5.8 1.1 1.6 1.8 2.3 2 2 4.2 3.2 6.7 3.2s4.7-1.2 6.7-3.2a16.2 16.2 0 002.1-2.8 15.7 15.7 0 00-2.1-2.8c-2-2-4.2-3.2-6.7-3.2S7.3 7.2 5.3 9.2A16.2 16.2 0 003.2 12c0 .2.2.3.3.5zm-2.4-1l.7-1.2L4 7.8C6.2 5.4 8.9 4 12 4c3 0 5.8 1.4 8.1 3.8a18.2 18.2 0 012.8 3.7v1l-.7 1.2-2.1 2.5c-2.3 2.4-5 3.8-8.1 3.8-3 0-5.8-1.4-8.1-3.8a18.2 18.2 0 01-2.8-3.7 1 1 0 010-1z"/><circle cx="12" cy="12" r="3.6"/><path d="M12 12 L12 8.4 A3.6 3.6 0 0 0 8.4 12 Z" fill="#fff"/></svg>
<svg class="a" style="left:1058px;top:487px" width="24" height="24" viewBox="0 0 24 24" fill="#222f3e"><path d="M9.8 15.7c.3.3.3.8 0 1-.3.4-.9.4-1.2 0l-4.4-4.1a.8.8 0 010-1.2l4.4-4.2c.3-.3.9-.3 1.2 0 .3.3.3.8 0 1.1L6 12l3.8 3.7zM14.2 15.7c-.3.3-.3.8 0 1 .4.4.9.4 1.2 0l4.4-4.1c.3-.3.3-.9 0-1.2l-4.4-4.2a.8.8 0 00-1.2 0c-.3.3-.3.8 0 1.1L18 12l-3.8 3.7z"/></svg>
<svg class="a" style="left:673px;top:494px" width="10" height="10" viewBox="0 0 10 10" fill="#222f3e" opacity=".5"><path d="M8.7 2.2c.3-.3.8-.3 1 0 .4.4.4.9 0 1.2L5.7 7.800c-.3.3-.9.3-1.2 0L.2 3.4a.8.8 0 010-1.2c.3-.3.8-.3 1.1 0L5 6l3.700-3.8z"/></svg>
<svg class="a" style="left:723px;top:494px" width="10" height="10" viewBox="0 0 10 10" fill="#222f3e" opacity=".5"><path d="M8.7 2.2c.3-.3.8-.3 1 0 .4.4.4.9 0 1.2L5.7 7.800c-.3.3-.9.3-1.2 0L.2 3.4a.8.8 0 010-1.2c.3-.3.8-.3 1.1 0L5 6l3.700-3.8z"/></svg>
<svg class="a" style="left:749px;top:416px" width="10" height="10" viewBox="0 0 10 10" fill="#222f3e" opacity=".5"><path d="M8.7 2.2c.3-.3.8-.3 1 0 .4.4.4.9 0 1.2L5.7 7.800c-.3.3-.9.3-1.2 0L.2 3.4a.8.8 0 010-1.2c.3-.3.8-.3 1.1 0L5 6l3.700-3.8z"/></svg>
<svg class="a" style="left:878px;top:416px" width="10" height="10" viewBox="0 0 10 10" fill="#222f3e" opacity=".5"><path d="M8.7 2.2c.3-.3.8-.3 1 0 .4.4.4.9 0 1.2L5.7 7.800c-.3.3-.9.3-1.2 0L.2 3.4a.8.8 0 010-1.2c.3-.3.8-.3 1.1 0L5 6l3.700-3.8z"/></svg>
<svg class="a" style="left:1008.7px;top:416px" width="10" height="10" viewBox="0 0 10 10" fill="#222f3e" opacity=".5"><path d="M8.7 2.2c.3-.3.8-.3 1 0 .4.4.4.9 0 1.2L5.7 7.800c-.3.3-.9.3-1.2 0L.2 3.4a.8.8 0 010-1.2c.3-.3.8-.3 1.1 0L5 6l3.700-3.8z"/></svg>
<svg class="a" style="left:1138.4px;top:416px" width="10" height="10" viewBox="0 0 10 10" fill="#222f3e" opacity=".5"><path d="M8.7 2.2c.3-.3.8-.3 1 0 .4.4.4.9 0 1.2L5.7 7.800c-.3.3-.9.3-1.2 0L.2 3.4a.8.8 0 010-1.2c.3-.3.8-.3 1.1 0L5 6l3.700-3.8z"/></svg>
<svg class="a" style="left:1192.5px;top:416px" width="10" height="10" viewBox="0 0 10 10" fill="#222f3e" opacity=".5"><path d="M8.7 2.2c.3-.3.8-.3 1 0 .4.4.4.9 0 1.2L5.7 7.800c-.3.3-.9.3-1.2 0L.2 3.4a.8.8 0 010-1.2c.3-.3.8-.3 1.1 0L5 6l3.700-3.8z"/></svg>
<svg class="a" style="left:1242px;top:416px" width="10" height="10" viewBox="0 0 10 10" fill="#222f3e" opacity=".5"><path d="M8.7 2.2c.3-.3.8-.3 1 0 .4.4.4.9 0 1.2L5.7 7.800c-.3.3-.9.3-1.2 0L.2 3.4a.8.8 0 010-1.2c.3-.3.8-.3 1.1 0L5 6l3.700-3.8z"/></svg>
<svg class="a" style="left:1160px;top:409px" width="24" height="24" viewBox="0 0 24 24" fill="#222f3e"><path d="M3 18h18v3H3z"/><path d="M7.7 16.7H3l3.3-3.3-.7-.8L10.2 8l4 4.1-4 4.2c-.2.2-.6.2-.8 0l-.6-.7-1.1 1.1zm5-7.5L11 7.4l3-2.9a2 2 0 012.6 0L18 6c.7.7.7 2 0 2.7l-2.9 2.9-1.8-1.8-.5-.6"/></svg>
<svg class="a" style="left:1210px;top:409px" width="24" height="24" viewBox="0 0 24 24" fill="#222f3e"><path d="M3 18h18v3H3z"/><path d="M8.7 16h-.8a.5.5 0 01-.5-.6l2.700-9c.1-.3.3-.4.5-.4h2.8c.2 0 .4.1.5.4l2.7 9a.5.5 0 01-.5.6h-.8a.5.5 0 01-.4-.4l-.7-2.2c0-.3-.3-.4-.5-.4h-3.4c-.2 0-.4.1-.5.4l-.7 2.2c0 .3-.2.4-.4.4zm2.6-7.6l-.6 2a.5.5 0 00.5.6h1.6a.5.5 0 00.5-.6l-.6-2c0-.3-.3-.4-.5-.4h-.4c-.2 0-.4.1-.5.4z"/></svg>
<span class="t" style="left:132.00px;top:32px;font-size:13px;transform:scaleX(1.1083);color:#807e9e;">Today</span>
<span class="t" style="left:205.00px;top:32px;font-size:13px;transform:scaleX(1.1161);color:#807e9e;">Contacts</span>
<span class="t" style="left:295.57px;top:32px;font-size:13px;transform:scaleX(1.0755);color:#807e9e;">Leads</span>
<span class="t" style="left:366.43px;top:32px;font-size:13px;transform:scaleX(1.0707);color:#807e9e;">Deals</span>
<span class="t" style="left:435.00px;top:32px;font-size:13px;transform:scaleX(1.0424);color:#807e9e;">Tasks</span>
<span class="t" style="left:502.40px;top:32px;font-size:13px;transform:scaleX(1.1004);color:#807e9e;">Memberships</span>
<span class="t" style="left:620.76px;top:32px;font-size:13px;transform:scaleX(1.1445);color:#807e9e;">Automation</span>
<span class="t" style="left:728.12px;top:32px;font-size:13px;transform:scaleX(1.1192);color:#807e9e;">Marketing</span>
<span class="t" style="left:825.00px;top:32px;font-size:13px;transform:scaleX(1.0803);color:#807e9e;">Quotes</span>
<span class="t" style="left:903.16px;top:32px;font-size:13px;transform:scaleX(1.0750);color:#807e9e;">Notes &amp; Letters</span>
<span class="t" style="left:1033.06px;top:32px;font-size:13px;transform:scaleX(1.0903);color:#807e9e;">Reports</span>
<span class="t" style="left:1114.72px;top:32px;font-size:13px;transform:scaleX(1.0410);color:#807e9e;">Files</span>
<span class="t" style="left:1276.20px;top:33px;font-size:13.5px;transform:scaleX(1.0847);color:#7a788f;">Search</span>
<span class="t" style="left:1530.00px;top:32px;font-size:13px;transform:scaleX(0.9136);color:#f07070;font-weight:700;">13</span>
<span class="t" style="left:1597.50px;top:32px;font-size:13px;transform:scaleX(1.0712);color:#34495e;">5905</span>
<span class="t" style="left:1690.00px;top:32px;font-size:13px;transform:scaleX(0.8982);color:#34495e;">15</span>
<span class="t" style="left:1778.96px;top:24px;font-size:12px;transform:scaleX(1.1409);color:#6c6884;">LONDON</span>
<span class="t" style="left:1777.00px;top:43px;font-size:12px;transform:scaleX(1.0434);color:#3f4a5c;">SUPPORT</span>
<span class="t" style="left:156.26px;top:76px;font-size:16px;transform:scaleX(1.0886);color:#6b6984;">Appointments</span>
<span class="t" style="left:156.27px;top:117px;font-size:16px;transform:scaleX(0.9916);color:#6b6984;">Files</span>
<span class="t" style="left:155.67px;top:158px;font-size:16px;transform:scaleX(1.0892);color:#6b6984;">Balance</span>
<span class="t" style="left:156.76px;top:198px;font-size:16px;transform:scaleX(1.0583);color:#6b6984;">Clinic Notes and Letters</span>
<span class="t" style="left:156.26px;top:239px;font-size:16px;transform:scaleX(1.0498);color:#6b6984;">Audio Notes</span>
<span class="t" style="left:155.73px;top:279px;font-size:16px;transform:scaleX(1.0264);color:#6b6984;">Drinks</span>
<span class="t" style="left:156.76px;top:320px;font-size:16px;transform:scaleX(1.0421);color:#6b6984;">Consent Forms History</span>
<span class="t" style="left:155.70px;top:360px;font-size:16px;transform:scaleX(1.0611);color:#6b6984;">Medical History</span>
<span class="t" style="left:155.68px;top:401px;font-size:16px;transform:scaleX(1.0842);color:#6b6984;">Body Composition</span>
<span class="t" style="left:156.76px;top:441px;font-size:16px;transform:scaleX(1.0747);color:#6b6984;">Treatment Record</span>
<span class="t" style="left:155.68px;top:482px;font-size:16px;transform:scaleX(1.0811);color:#6b6984;">Recommended Products</span>
<span class="t" style="left:155.70px;top:522px;font-size:16px;transform:scaleX(1.0551);color:#6b6984;">Diagnosis Record</span>
<span class="t" style="left:155.68px;top:563px;font-size:16px;transform:scaleX(1.0800);color:#6b6984;">Direct Debit</span>
<span class="t" style="left:155.69px;top:604px;font-size:16px;transform:scaleX(1.0740);color:#6b6984;">Braintree</span>
<span class="t" style="left:155.69px;top:644px;font-size:16px;transform:scaleX(1.0740);color:#6b6984;">Loyalty Programme</span>
<span class="t" style="left:155.67px;top:685px;font-size:16px;transform:scaleX(1.0903);color:#6b6984;">Merge Contacts</span>
<span class="t" style="left:156.76px;top:725px;font-size:16px;transform:scaleX(1.0473);color:#6b6984;">Quotes</span>
<span class="t" style="left:631.76px;top:115px;font-size:13px;transform:scaleX(1.0913);color:#4a4860;">Client Placeholders</span>
<span class="t" style="left:940.02px;top:115px;font-size:13px;transform:scaleX(1.1085);color:#4a4860;">Appointment Placeholders</span>
<span class="t" style="left:1248.00px;top:115px;font-size:13px;transform:scaleX(1.0877);color:#4a4860;">Consent Form Placeholders</span>
<span class="t" style="left:1555.98px;top:115px;font-size:13px;transform:scaleX(1.0798);color:#4a4860;">Custom Fields Placeholders</span>
<span class="t" style="left:649.20px;top:150px;font-size:13px;transform:scaleX(1.0904);color:#56546a;">Select</span>
<span class="t" style="left:957.20px;top:150px;font-size:13px;transform:scaleX(1.0904);color:#56546a;">Select</span>
<span class="t" style="left:1265.20px;top:150px;font-size:13px;transform:scaleX(1.0904);color:#56546a;">Select</span>
<span class="t" style="left:1573.20px;top:150px;font-size:13px;transform:scaleX(1.0904);color:#56546a;">Select</span>
<span class="t" style="left:644.70px;top:209px;font-size:13px;transform:scaleX(1.1103);color:#56546a;">Select Email template</span>
<span class="t" style="left:645.20px;top:262px;font-size:13px;transform:scaleX(1.1142);color:#56546a;">Select Consent form</span>
<span class="t" style="left:645.50px;top:315px;font-size:13px;transform:scaleX(1.0649);color:#4d4b5f;">7399 | M | Laser Hair Removal | Lower Leg | 10/02/2022</span>
<span class="t" style="left:645.06px;top:368px;font-size:13px;transform:scaleX(1.0904);color:#6e6c80;">Email Subject</span>
<span class="t" style="left:643.83px;top:414px;font-size:13.5px;transform:scaleX(1.1700);color:#222f3e;">Paragraph</span>
<span class="t" style="left:773.83px;top:414px;font-size:13.5px;transform:scaleX(1.1700);color:#222f3e;">Paragraph</span>
<span class="t" style="left:903.68px;top:414px;font-size:13.5px;transform:scaleX(1.1059);color:#222f3e;">System Font</span>
<span class="t" style="left:1034.19px;top:414px;font-size:13.5px;transform:scaleX(1.0488);color:#222f3e;">12pt</span>
<span class="t" style="left:640.20px;top:886px;font-size:11px;transform:scaleX(1.3051);color:rgba(34,47,62,.7);">P</span>
<span class="t" style="left:1712.18px;top:886px;font-size:11.5px;transform:scaleX(1.0462);color:rgba(34,47,62,.7);">POWERED BY TINY</span>
<span class="t" style="left:1652.00px;top:938px;font-size:13px;transform:scaleX(0.9594);color:#fff;font-weight:700;">Preview</span>
<span class="t" style="left:1736.02px;top:938px;font-size:13px;transform:scaleX(1.0313);color:#fff;font-weight:700;">Clear</span>
<span class="t" style="left:1804.50px;top:938px;font-size:13px;transform:scaleX(1.0142);color:#fff;font-weight:700;">Send</span>
</body></html>
